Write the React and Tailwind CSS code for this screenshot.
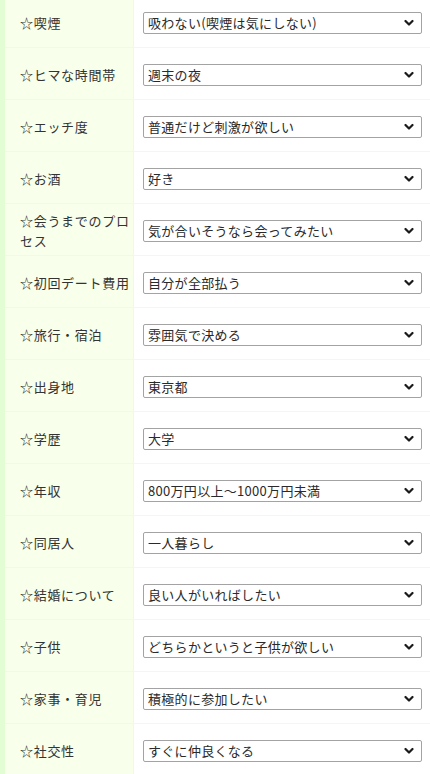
import { useState } from 'react';

const items = [
  { label: '☆喫煙', value: '吸わない(喫煙は気にしない)' },
  { label: '☆ヒマな時間帯', value: '週末の夜' },
  { label: '☆エッチ度', value: '普通だけど刺激が欲しい' },
  { label: '☆お酒', value: '好き' },
  { label: '☆会うまでのプロセス', value: '気が合いそうなら会ってみたい' },
  { label: '☆初回デート費用', value: '自分が全部払う' },
  { label: '☆旅行・宿泊', value: '雰囲気で決める' },
  { label: '☆出身地', value: '東京都' },
  { label: '☆学歴', value: '大学' },
  { label: '☆年収', value: '800万円以上～1000万円未満' },
  { label: '☆同居人', value: '一人暮らし' },
  { label: '☆結婚について', value: '良い人がいればしたい' },
  { label: '☆子供', value: 'どちらかというと子供が欲しい' },
  { label: '☆家事・育児', value: '積極的に参加したい' },
  { label: '☆社交性', value: 'すぐに仲良くなる' },
];

function Chevron() {
  return (
    <svg width="10" height="7" viewBox="0 0 10 7" className="pointer-events-none absolute right-[8px] top-1/2 -translate-y-1/2">
      <path d="M1.5 1.5 L5 5 L8.5 1.5" fill="none" stroke="#1a1a1a" strokeWidth="2.2" strokeLinecap="round" strokeLinejoin="round" />
    </svg>
  );
}

function Row({ label, value }) {
  const [v, setV] = useState(value);
  return (
    <div className="flex h-[52px] border-b border-[#effbe3]">
      <div className="flex w-[129px] shrink-0 items-center border-r border-[#eefbe0] bg-[#f8ffea] pl-[15px] pr-[2px] pt-[2px] text-[13px] leading-[20px] tracking-[0.7px] text-[#333]">
        {label}
      </div>
      <div className="flex flex-1 items-center pl-[9px] pr-[8px] pt-[2px]">
        <div className="relative w-full">
          <select
            value={v}
            onChange={(e) => setV(e.target.value)}
            className="block h-[22px] w-full appearance-none rounded-[2px] border border-[#a3a3a3] bg-white pl-[4px] text-[13px] leading-[20px] tracking-[0.3px] text-[#2a2a2a] outline-none"
            style={{ fontFamily: '"Noto Sans CJK JP", "Noto Sans", sans-serif' }}
          >
            <option value={value}>{value}</option>
          </select>
          <Chevron />
        </div>
      </div>
    </div>
  );
}

export default function App() {
  return (
    <div
      className="h-[774px] overflow-hidden bg-white"
      style={{ fontFamily: '"Noto Sans CJK JP", "Noto Sans", sans-serif' }}
    >
      <div className="-mt-[4px] border-l-[5px] border-[#e2fdd3]">
        {items.map((it) => (
          <Row key={it.label} label={it.label} value={it.value} />
        ))}
      </div>
    </div>
  );
}
